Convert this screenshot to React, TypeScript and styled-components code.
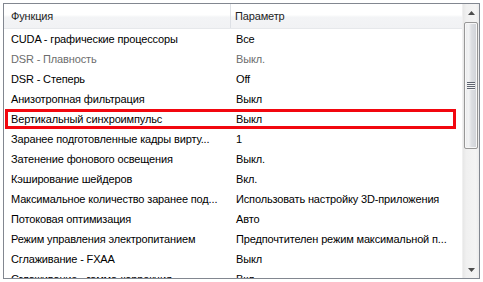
import React from "react";
import styled, { createGlobalStyle } from "styled-components";

const Global = createGlobalStyle`
  html, body { margin: 0; padding: 0; background: #ffffff; }
  body { font-family: "Liberation Sans", Arial, sans-serif; }
`;

const Page = styled.div`
  padding: 3px;
  width: 483px;
  height: 282px;
  box-sizing: border-box;
`;

const Frame = styled.div`
  width: 477px;
  height: 276px;
  box-sizing: border-box;
  border: 1px solid #828790;
  display: flex;
  background: #ffffff;
  overflow: hidden;
`;

const ListArea = styled.div`
  flex: 1;
  display: flex;
  flex-direction: column;
  overflow: hidden;
`;

const HeaderRow = styled.div`
  display: flex;
  height: 25px;
  flex: none;
  background: linear-gradient(#ffffff 0%, #ffffff 45%, #f3f4f6 55%, #f1f2f4 100%);
  border-bottom: 1px solid #e6e8eb;
  box-sizing: border-box;
`;

const HeaderCell = styled.div<{ $w?: number }>`
  ${(p) => (p.$w ? `width: ${p.$w}px;` : "flex: 1;")}
  flex-shrink: 0;
  box-sizing: border-box;
  padding-left: ${(p) => (p.$w ? 7 : 4)}px;
  display: flex;
  align-items: center;
  font-size: 11px;
  letter-spacing: -0.15px;
  color: #1e1e1e;
  border-right: ${(p) => (p.$w ? "1px solid #dde0e5" : "none")};
`;

const Row = styled.div`
  position: relative;
  display: flex;
  height: 20px;
  flex: none;
  align-items: center;
`;

const Cell = styled.div<{ $w?: number; $muted?: boolean }>`
  ${(p) => (p.$w ? `width: ${p.$w}px;` : "flex: 1;")}
  flex-shrink: 0;
  box-sizing: border-box;
  padding-left: ${(p) => (p.$w ? 7 : 5)}px;
  padding-right: 4px;
  font-size: 11px;
  letter-spacing: -0.15px;
  color: ${(p) => (p.$muted ? "#6d6d6d" : "#000000")};
  white-space: nowrap;
  overflow: hidden;
  text-overflow: ellipsis;
`;

const Highlight = styled.div`
  position: absolute;
  left: 1px;
  right: 6px;
  top: 0;
  bottom: 0;
  border: 3px solid #f2070f;
  pointer-events: none;
`;

const ScrollBar = styled.div`
  width: 17px;
  flex: none;
  display: flex;
  flex-direction: column;
  background: linear-gradient(90deg, #e7e7e7, #f0f0f0 20%, #f4f4f4 80%, #ebebeb);
  border-left: 1px solid #f0f0f0;
  box-sizing: border-box;
`;

const Arrow = styled.div`
  height: 17px;
  flex: none;
  display: flex;
  align-items: center;
  justify-content: center;
`;

const Thumb = styled.div`
  height: 127px;
  margin: 1px 1px 0 1px;
  flex: none;
  box-sizing: border-box;
  border: 1px solid #979797;
  border-radius: 2px;
  background: linear-gradient(90deg, #e9eaec 0%, #f2f3f4 30%, #dcdee2 55%, #cfd2d7 100%);
  box-shadow: inset 0 0 0 1px #f7f7f7;
  display: flex;
  align-items: center;
  justify-content: center;
`;

const Track = styled.div`
  flex: 1;
`;

const Grip = () => (
  <svg width="8" height="8" viewBox="0 0 8 8">
    {[0, 2, 4, 6].map((y) => (
      <g key={y}>
        <rect x="0" y={y} width="8" height="1" fill="#5e6470" />
        <rect x="0" y={y + 1} width="8" height="1" fill="#f4f4f4" />
      </g>
    ))}
  </svg>
);

const Tri = ({ up }: { up?: boolean }) => (
  <svg width="7" height="4" viewBox="0 0 7 4">
    {up ? (
      <path d="M3.5 0 L7 4 L0 4 Z" fill="#4d4d4d" />
    ) : (
      <path d="M0 0 L7 0 L3.5 4 Z" fill="#4d4d4d" />
    )}
  </svg>
);

type Item = { name: string; value: string; muted?: boolean; hl?: boolean };

const items: Item[] = [
  { name: "CUDA - графические процессоры", value: "Все" },
  { name: "DSR - Плавность", value: "Выкл.", muted: true },
  { name: "DSR - Степерь", value: "Off" },
  { name: "Анизотропная фильтрация", value: "Выкл" },
  { name: "Вертикальный синхроимпульс", value: "Выкл", hl: true },
  { name: "Заранее подготовленные кадры вирту...", value: "1" },
  { name: "Затенение фонового освещения", value: "Выкл." },
  { name: "Кэширование шейдеров", value: "Вкл." },
  { name: "Максимальное количество заранее под...", value: "Использовать настройку 3D-приложения" },
  { name: "Потоковая оптимизация", value: "Авто" },
  { name: "Режим управления электропитанием", value: "Предпочтителен режим максимальной п..." },
  { name: "Сглаживание - FXAA", value: "Выкл" },
  { name: "Сглаживание - гамма-коррекция", value: "Вкл" },
];

const COL1 = 227;

export default function App() {
  return (
    <Page>
      <Global />
      <Frame>
        <ListArea>
          <HeaderRow>
            <HeaderCell $w={COL1}>Функция</HeaderCell>
            <HeaderCell>Параметр</HeaderCell>
          </HeaderRow>
          {items.map((it) => (
            <Row key={it.name}>
              <Cell $w={COL1} $muted={it.muted}>{it.name}</Cell>
              <Cell $muted={it.muted}>{it.value}</Cell>
              {it.hl && <Highlight />}
            </Row>
          ))}
        </ListArea>
        <ScrollBar>
          <Arrow><Tri up /></Arrow>
          <Thumb><Grip /></Thumb>
          <Track />
          <Arrow><Tri /></Arrow>
        </ScrollBar>
      </Frame>
    </Page>
  );
}
